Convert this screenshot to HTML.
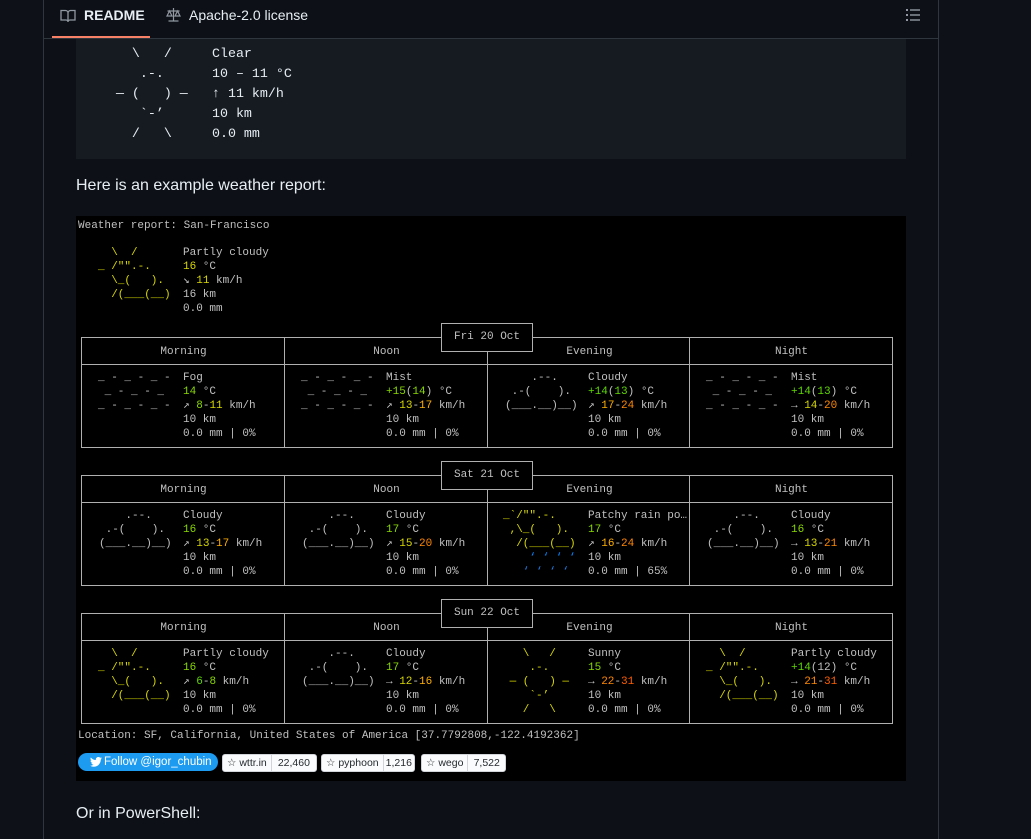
<!DOCTYPE html>
<html><head><meta charset="utf-8"><style>
*{margin:0;padding:0;box-sizing:border-box}
body{width:1031px;height:839px;background:#0e1118;position:relative;overflow:hidden;font-family:"Liberation Sans",sans-serif;color:#e6edf3}
.a{position:absolute}
pre{font-family:"Liberation Mono",monospace;margin:0}
.t{font-size:11px;line-height:14px;color:#c0c0c0;white-space:pre}
.g{color:#87d700}.y{color:#d7d700}.o{color:#ffaf00}.r{color:#ff8700}.rr{color:#ff5f00}.s{color:#d7d700}.b{color:#1f7ae0}.bb{color:#0087ff}.gg{color:#5fd700}
.tbl{position:absolute;left:81px;width:812px;height:111px;border:1px solid #b0b0b0}
.hd{position:absolute;top:26px;left:0;right:0;border-top:1px solid #b0b0b0}
.vl{position:absolute;top:0;bottom:0;border-left:1px solid #b0b0b0}
.hl{position:absolute;top:7px;width:203px;text-align:center}
.dt{position:absolute;left:441px;width:92px;height:29px;border:1px solid #b0b0b0;background:#000;text-align:center;line-height:27px}
.btn{position:absolute;top:754px;height:18px;background:#fafbfc;border:1px solid #d1d5da;border-radius:3px;font-size:10.5px;color:#24292e;line-height:16px;display:flex;white-space:nowrap;overflow:hidden}
.btn span{padding:0 4px;white-space:nowrap;flex:none}.btn span+span{border-left:1px solid #d1d5da;flex:1;text-align:center;padding:0 2px}
</style></head><body>
<div class="a" style="left:43px;top:0;width:896px;height:839px;border-left:1px solid #30363d;border-right:1px solid #30363d;background:#0d1117"></div>
<div class="a" style="left:44px;top:38px;width:894px;border-top:1px solid #30363d"></div>
<div class="a" style="left:52px;top:36px;width:98px;height:2px;background:#f78166"></div>
<svg class="a" style="left:60px;top:8px" width="16" height="16" viewBox="0 0 16 16"><path d="M1 2.5h4.5A2.5 2.5 0 0 1 8 5v9a2 2 0 0 0-2-2H1zM15 2.5h-4.5A2.5 2.5 0 0 0 8 5v9a2 2 0 0 1 2-2h5z" fill="none" stroke="#9198a1" stroke-width="1.3"/></svg>
<div class="a" style="left:84px;top:7px;font-size:14px;font-weight:bold;color:#e6edf3">README</div>
<svg class="a" style="left:165px;top:7px" width="17" height="16" viewBox="0 0 16 16"><path d="M8 1v13M3 14h10M2 4h12M4 4l-2.5 5h5zM12 4l-2.5 5h5z" fill="none" stroke="#9198a1" stroke-width="1.2"/></svg>
<div class="a" style="left:189px;top:7px;font-size:14px;color:#e6edf3">Apache-2.0 license</div>
<svg class="a" style="left:905px;top:8px" width="16" height="14" viewBox="0 0 16 14"><g fill="#9198a1"><rect x="1" y="1" width="2" height="2"/><rect x="1" y="6" width="2" height="2"/><rect x="1" y="11" width="2" height="2"/><rect x="5" y="1.3" width="10" height="1.4"/><rect x="5" y="6.3" width="10" height="1.4"/><rect x="5" y="11.3" width="10" height="1.4"/></g></svg>

<div class="a" style="left:76px;top:39px;width:830px;height:120px;background:#161b22"></div>
<pre class="a" style="left:92px;top:44px;font-size:13.3px;line-height:20px;color:#e6edf3">     \   /
      .-.
   ― (   ) ―
      `-’
     /   \</pre>
<pre class="a" style="left:212px;top:44px;font-size:13.3px;line-height:20px;color:#e6edf3">Clear
10 – 11 °C
↑ 11 km/h
10 km
0.0 mm</pre>
<div class="a" style="left:76px;top:177px;font-size:16px">Here is an example weather report:</div>

<div class="a" style="left:76px;top:216px;width:830px;height:565px;background:#000"></div>
<pre class="a t" style="left:78px;top:219px">Weather report: San-Francisco</pre>
<pre class="a t s" style="left:98px;top:246px">  \  /
_ /"".-.
  \_(   ).
  /(___(__)</pre>
<pre class="a t" style="left:183px;top:246px">Partly cloudy
<span class="y">16</span> °C
↘ <span class="y">11</span> km/h
16 km
0.0 mm</pre>

<!-- Block 1 -->
<div class="tbl" style="top:337px"><div class="hd"></div><div class="vl" style="left:202px"></div><div class="vl" style="left:405px"></div><div class="vl" style="left:607px"></div>
<pre class="t hl" style="left:0">Morning</pre><pre class="t hl" style="left:203px">Noon</pre><pre class="t hl" style="left:406px">Evening</pre><pre class="t hl" style="left:608px">Night</pre></div>
<div class="dt" style="top:323px"><pre class="t" style="line-height:27px">Fri 20 Oct</pre></div>
<pre class="a t" style="left:98px;top:371px">
_ - _ - _ -
 _ - _ - _
_ - _ - _ -</pre>
<pre class="a t" style="left:183px;top:371px">Fog
<span class="g">14</span> °C
↗ <span class="g">8</span>-<span class="y">11</span> km/h
10 km
0.0 mm | 0%</pre>
<pre class="a t" style="left:301px;top:371px">
_ - _ - _ -
 _ - _ - _
_ - _ - _ -</pre>
<pre class="a t" style="left:386px;top:371px">Mist
<span class="g">+15</span>(<span class="g">14</span>) °C
↗ <span class="y">13</span>-<span class="o">17</span> km/h
10 km
0.0 mm | 0%</pre>
<pre class="a t" style="left:505px;top:371px">
    .--.
 .-(    ).
(___.__)__)</pre>
<pre class="a t" style="left:588px;top:371px">Cloudy
<span class="gg">+14</span>(<span class="gg">13</span>) °C
↗ <span class="o">17</span>-<span class="r">24</span> km/h
10 km
0.0 mm | 0%</pre>
<pre class="a t" style="left:706px;top:371px">
_ - _ - _ -
 _ - _ - _
_ - _ - _ -</pre>
<pre class="a t" style="left:791px;top:371px">Mist
<span class="gg">+14</span>(<span class="gg">13</span>) °C
→ <span class="y">14</span>-<span class="r">20</span> km/h
10 km
0.0 mm | 0%</pre>

<!-- Block 2 -->
<div class="tbl" style="top:475px"><div class="hd"></div><div class="vl" style="left:202px"></div><div class="vl" style="left:405px"></div><div class="vl" style="left:607px"></div>
<pre class="t hl" style="left:0">Morning</pre><pre class="t hl" style="left:203px">Noon</pre><pre class="t hl" style="left:406px">Evening</pre><pre class="t hl" style="left:608px">Night</pre></div>
<div class="dt" style="top:461px"><pre class="t" style="line-height:27px">Sat 21 Oct</pre></div>
<pre class="a t" style="left:99px;top:509px">
    .--.
 .-(    ).
(___.__)__)</pre>
<pre class="a t" style="left:183px;top:509px">Cloudy
<span class="g">16</span> °C
↗ <span class="y">13</span>-<span class="o">17</span> km/h
10 km
0.0 mm | 0%</pre>
<pre class="a t" style="left:302px;top:509px">
    .--.
 .-(    ).
(___.__)__)</pre>
<pre class="a t" style="left:386px;top:509px">Cloudy
<span class="g">17</span> °C
↗ <span class="y">15</span>-<span class="r">20</span> km/h
10 km
0.0 mm | 0%</pre>
<pre class="a t" style="left:503px;top:509px"><span class="s">_`/"".-.</span>
<span class="s"> ,\_(   ).</span>
<span class="s">  /(___(__)</span>
<span class="bb">    ‘ ‘ ‘ ‘</span>
<span class="b">   ‘ ‘ ‘ ‘</span></pre>
<pre class="a t" style="left:588px;top:509px">Patchy rain po…
<span class="g">17</span> °C
↗ <span class="o">16</span>-<span class="r">24</span> km/h
10 km
0.0 mm | 65%</pre>
<pre class="a t" style="left:707px;top:509px">
    .--.
 .-(    ).
(___.__)__)</pre>
<pre class="a t" style="left:791px;top:509px">Cloudy
<span class="g">16</span> °C
→ <span class="y">13</span>-<span class="r">21</span> km/h
10 km
0.0 mm | 0%</pre>

<!-- Block 3 -->
<div class="tbl" style="top:613px"><div class="hd"></div><div class="vl" style="left:202px"></div><div class="vl" style="left:405px"></div><div class="vl" style="left:607px"></div>
<pre class="t hl" style="left:0">Morning</pre><pre class="t hl" style="left:203px">Noon</pre><pre class="t hl" style="left:406px">Evening</pre><pre class="t hl" style="left:608px">Night</pre></div>
<div class="dt" style="top:599px"><pre class="t" style="line-height:27px">Sun 22 Oct</pre></div>
<pre class="a t s" style="left:98px;top:647px">  \  /
_ /"".-.
  \_(   ).
  /(___(__)</pre>
<pre class="a t" style="left:183px;top:647px">Partly cloudy
<span class="g">16</span> °C
↗ <span class="gg">6</span>-<span class="g">8</span> km/h
10 km
0.0 mm | 0%</pre>
<pre class="a t" style="left:302px;top:647px">
    .--.
 .-(    ).
(___.__)__)</pre>
<pre class="a t" style="left:386px;top:647px">Cloudy
<span class="g">17</span> °C
→ <span class="y">12</span>-<span class="o">16</span> km/h
10 km
0.0 mm | 0%</pre>
<pre class="a t s" style="left:503px;top:647px">   \   /
    .-.
 ― (   ) ―
    `-’
   /   \</pre>
<pre class="a t" style="left:588px;top:647px">Sunny
<span class="g">15</span> °C
→ <span class="r">22</span>-<span class="rr">31</span> km/h
10 km
0.0 mm | 0%</pre>
<pre class="a t s" style="left:706px;top:647px">  \  /
_ /"".-.
  \_(   ).
  /(___(__)</pre>
<pre class="a t" style="left:791px;top:647px">Partly cloudy
<span class="gg">+14</span>(12) °C
→ <span class="r">21</span>-<span class="rr">31</span> km/h
10 km
0.0 mm | 0%</pre>

<pre class="a t" style="left:78px;top:729px">Location: SF, California, United States of America [37.7792808,-122.4192362]</pre>
<div class="a" style="left:78px;top:753px;width:140px;height:18px;border-radius:9px;background:#1d9bf0;color:#fff;font-size:11.5px;line-height:18px;padding-left:26px;white-space:nowrap">Follow @igor_chubin</div>
<svg class="a" style="left:90px;top:757px" width="12" height="10" viewBox="0 0 24 20"><path d="M24 2.4a10 10 0 0 1-2.8.8A5 5 0 0 0 23.3.4a10 10 0 0 1-3.1 1.2A4.9 4.9 0 0 0 11.8 6 14 14 0 0 1 1.7.9a4.9 4.9 0 0 0 1.5 6.6A4.9 4.9 0 0 1 1 6.9 4.9 4.9 0 0 0 4.9 11.8a4.9 4.9 0 0 1-2.2.1 4.9 4.9 0 0 0 4.6 3.4A9.9 9.9 0 0 1 0 17.3 14 14 0 0 0 7.5 19.5c9 0 14-7.5 14-14v-.6A10 10 0 0 0 24 2.4z" fill="#fff"/></svg>
<div class="btn" style="left:222px;width:95px"><span>☆ wttr.in</span><span>22,460</span></div>
<div class="btn" style="left:321px;width:94px"><span>☆ pyphoon</span><span>1,216</span></div>
<div class="btn" style="left:421px;width:85px"><span>☆ wego</span><span>7,522</span></div>

<div class="a" style="left:76px;top:805px;font-size:16px">Or in PowerShell:</div>
</body></html>
